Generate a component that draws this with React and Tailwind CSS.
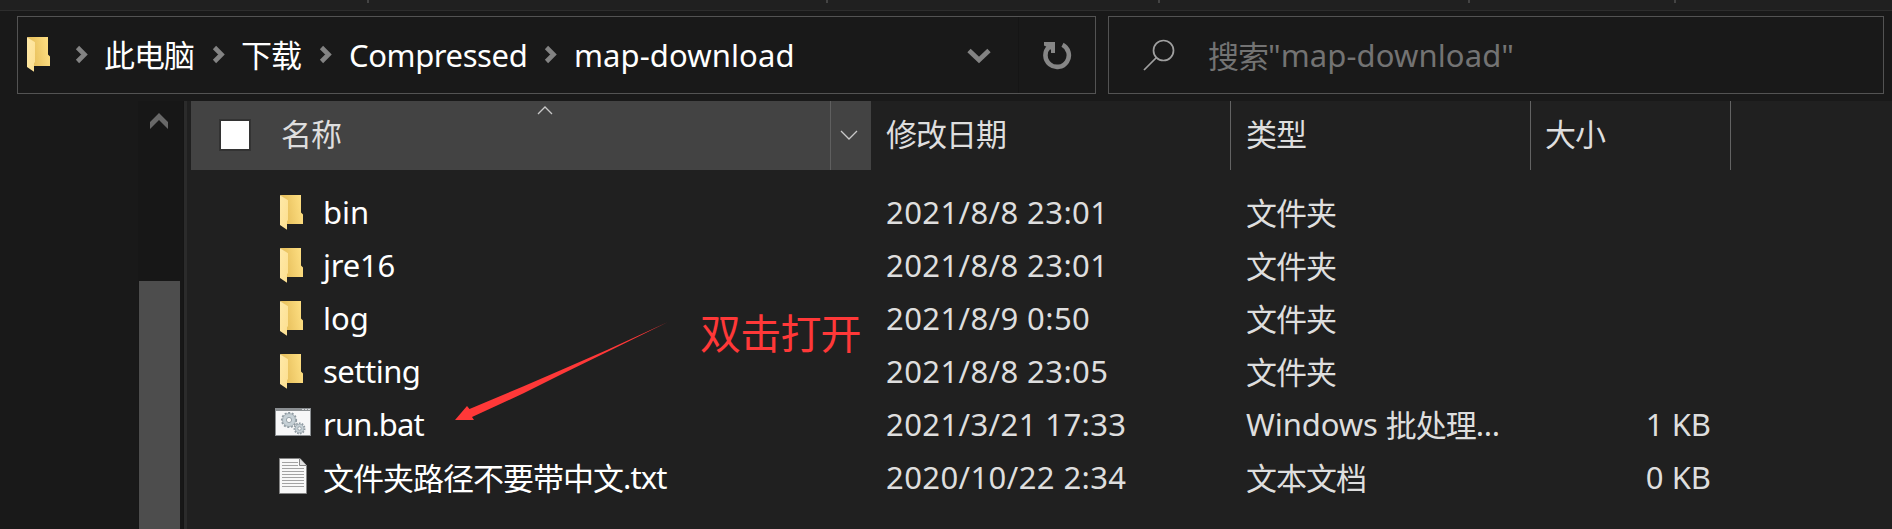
const entries = [
  { icon: "folder", name: [["l", "bin", "tracking-[0px]"]], date: "2021/8/8 23:01", type: [["c", "文件夹"]], size: "" },
  { icon: "folder", name: [["l", "jre16", "tracking-[-0.2px]"]], date: "2021/8/8 23:01", type: [["c", "文件夹"]], size: "" },
  { icon: "folder", name: [["l", "log", "tracking-[0px]"]], date: "2021/8/9 0:50", type: [["c", "文件夹"]], size: "" },
  { icon: "folder", name: [["l", "setting", "tracking-[-0.5px]"]], date: "2021/8/8 23:05", type: [["c", "文件夹"]], size: "" },
  { icon: "bat", name: [["l", "run.bat", "tracking-[-0.9px]"]], date: "2021/3/21 17:33", type: [["l", "Windows ", "tracking-[-0.1px]"], ["c", "批处理"], ["l", "...", "tracking-[-0.3px]"]], size: "1 KB" },
  { icon: "txt", name: [["c", "文件夹路径不要带中文"], ["l", ".txt", "tracking-[-0.9px]"]], date: "2020/10/22 2:34", type: [["c", "文本文档"]], size: "0 KB" },
];

function Cjk({ children }) {
  return <span className="align-[-1px] text-[31px] leading-none tracking-[-1px]">{children}</span>;
}

function Mixed({ parts }) {
  return parts.map(([kind, text, tracking], i) =>
    kind === "c" ? <Cjk key={i}>{text}</Cjk> : <span key={i} className={tracking}>{text}</span>
  );
}

function FolderIcon() {
  return (
    <svg width="24" height="36" viewBox="0 0 24 36" className="block shrink-0">
      <defs>
        <linearGradient id="back" x1="0" y1="0.6" x2="1" y2="0.4">
          <stop offset="0.25" stopColor="#e9c25f" />
          <stop offset="1" stopColor="#fedf83" />
        </linearGradient>
        <linearGradient id="flap" x1="0" y1="0" x2="1" y2="1">
          <stop offset="0" stopColor="#ffe9a8" />
          <stop offset="1" stopColor="#fcdf90" />
        </linearGradient>
      </defs>
      <path d="M0 0H21V17.5L23 19.500V29H6V5Z" fill="url(#back)" />
      <path d="M0 0L8 5.200V25L7 26.200V34.700L0 30Z" fill="url(#flap)" />
    </svg>
  );
}

function Gear({ cx, cy, r, w }) {
  return (
    <g>
      <circle cx={cx} cy={cy} r={r + 0.6} fill="none" stroke="#8f9aa2" strokeWidth="2" strokeDasharray={w} />
      <circle cx={cx} cy={cy} r={r} fill="#c6d0d6" stroke="#98a3aa" strokeWidth="0.8" />
      <circle cx={cx} cy={cy} r={r * 0.4} fill="#fafafa" stroke="#98a3aa" strokeWidth="1" />
    </g>
  );
}

function BatIcon() {
  return (
    <svg width="36" height="28" viewBox="0 0 36 28" className="mb-[5px] block shrink-0">
      <rect width="36" height="28" fill="#8b8f92" />
      <rect x="1" y="3" width="34" height="24" fill="#f7f7f8" />
      <path d="M27 1.500H29M30 1.500H32M33 1.500H35" stroke="#d5d8da" strokeWidth="1" />
      <Gear cx={14} cy={12} r={6.5} w="2 1.6" />
      <Gear cx={24.500} cy={20.500} r={4.4} w="1.6 1.2" />
    </svg>
  );
}

function TxtIcon() {
  return (
    <svg width="28" height="36" viewBox="0 0 28 36" className="mb-[3px] block shrink-0">
      <path d="M0.500 0.500H21L27.500 7.500V35.500H0.500Z" fill="#f8f8f8" stroke="#858585" />
      <path d="M20.500 0.500V7.500H27.500" fill="#e2e2e2" stroke="#858585" />
      <path d="M3 4.500H19M3 7.500H19M3 10.500H25M3 13.500H25M3 16.500H25M3 19.500H25M3 22.500H25M3 25.500H25M3 28.500H25" stroke="#a3a3a3" />
    </svg>
  );
}

const icons = { folder: FolderIcon, bat: BatIcon, txt: TxtIcon };

function Crumb() {
  return (
    <svg width="14" height="20" viewBox="0 0 14 20" className="block shrink-0">
      <path d="M2.500 2.500L9.500 9.500L2.500 16.500" fill="none" stroke="#838383" strokeWidth="4.600" />
    </svg>
  );
}

function TopStrip() {
  return (
    <div className="flex h-[11px] shrink-0 items-start border-b border-[#2d2d2d] bg-[#202020]">
      <div className="ml-[367px] h-[3px] w-[2px] bg-[#444]" />
      <div className="ml-[457px] h-[3px] w-[2px] bg-[#444]" />
      <div className="ml-[330px] h-[3px] w-[2px] bg-[#444]" />
      <div className="ml-[308px] h-[3px] w-[2px] bg-[#444]" />
      <div className="ml-[204px] h-[3px] w-[2px] bg-[#444]" />
    </div>
  );
}

function AddressBar() {
  return (
    <div className="flex h-[78px] w-[1079px] items-center border border-[#535353] text-white">
      <div className="ml-[9px] w-[48px]"><FolderIcon /></div>
      <div className="-mt-px w-[29px]"><Crumb /></div>
      <div className="-mt-[2px] w-[108px] leading-[74px]"><Cjk>此电脑</Cjk></div>
      <div className="-mt-px w-[29px]"><Crumb /></div>
      <div className="-mt-[2px] w-[78px] leading-[74px]"><Cjk>下载</Cjk></div>
      <div className="-mt-px w-[30px]"><Crumb /></div>
      <div className="-mt-px w-[195px] leading-[74px] tracking-[-0.4px]">Compressed</div>
      <div className="-mt-px w-[30px]"><Crumb /></div>
      <div className="-mt-px leading-[74px] tracking-[0.1px]">map-download</div>
      <svg width="24" height="16" viewBox="0 0 24 16" className="ml-auto mr-[27px] mt-[2px] block">
        <path d="M2 2.500L12 12L22 2.500" fill="none" stroke="#838383" strokeWidth="4.800" />
      </svg>
      <div className="flex h-full w-[77px] items-center border-l border-[#151515] pl-[23px] pt-[2px]">
        <svg width="30" height="30" viewBox="0 0 30 30" className="block">
          <path d="M20.500 3.800A11.700 11.700 0 1 1 7 5.800" fill="none" stroke="#868686" strokeWidth="4.600" />
          <path d="M2 1H13V12H9V9L7 7L2 4.500Z" fill="#868686" />
        </svg>
      </div>
    </div>
  );
}

function SearchBox() {
  return (
    <div className="flex h-[78px] w-[776px] items-center border border-[#535353] text-[#737373]">
      <svg width="32" height="32" viewBox="0 0 32 32" className="ml-[34px] block">
        <circle cx="20.500" cy="11.500" r="10" fill="none" stroke="#a0a0a0" strokeWidth="1.700" />
        <path d="M13.500 18.500L1 31" stroke="#a0a0a0" strokeWidth="1.700" />
      </svg>
      <div className="-mt-px ml-[33px] whitespace-nowrap leading-[74px]"><Cjk>搜索</Cjk><span className="tracking-[0.1px]">"map-download"</span></div>
    </div>
  );
}

function NavPane() {
  return (
    <div className="flex w-[187px] shrink-0">
      <div className="w-[138px]" />
      <div className="flex w-[45px] flex-col bg-[#171717] pl-px">
        <svg width="20" height="18" viewBox="0 0 20 18" className="ml-[11px] mt-[11px] block">
          <path d="M0 10L9 1L18 10V17L9 8L0 17Z" fill="#686868" />
        </svg>
        <div className="mt-[151px] w-[41px] flex-1 bg-[#4d4d4d]" />
      </div>
      <div className="w-px bg-[#151515]" />
      <div className="w-[3px] bg-[#2b2b2b]" />
    </div>
  );
}

function HeaderRow() {
  return (
    <div className="ml-[4px] flex h-[69px] leading-[65px] text-[#dedede]">
      <div className="flex w-[639px] bg-[#434343]">
        <div className="ml-[28px] mt-[18px] size-[32px] border-2 border-[#333] bg-white" />
        <div className="ml-[30px] w-[252px]"><Cjk>名称</Cjk></div>
        <svg width="16" height="10" viewBox="0 0 16 10" className="ml-[4px] mt-[4px] block">
          <path d="M1 9L8 2L15 9" fill="none" stroke="#c8c8c8" strokeWidth="1.300" />
        </svg>
      </div>
      <div className="w-[41px] border-l border-[#5f5f5f] bg-[#434343] pl-[9px] pt-[29px]">
        <svg width="18" height="11" viewBox="0 0 18 11" className="block">
          <path d="M1 1L9 9L17 1" fill="none" stroke="#c8c8c8" strokeWidth="1.300" />
        </svg>
      </div>
      <div className="w-[360px] border-r border-[#636363] pl-[15px]"><Cjk>修改日期</Cjk></div>
      <div className="w-[300px] border-r border-[#636363] pl-[15px]"><Cjk>类型</Cjk></div>
      <div className="w-[200px] border-r border-[#636363] pl-[14px]"><Cjk>大小</Cjk></div>
    </div>
  );
}

function EntryRow({ entry }) {
  const Icon = icons[entry.icon];
  return (
    <div className="flex h-[53px] whitespace-nowrap leading-[53px] text-[#dedede]">
      <div className={entry.icon === "folder" ? "ml-[86px] flex w-[43px] items-center justify-center pr-[5px]" : "ml-[86px] flex w-[43px] items-center justify-center pr-[3px]"}>
        <Icon />
      </div>
      <div className="ml-[7px] w-[563px] text-white"><Mixed parts={entry.name} /></div>
      <div className="w-[360px] tracking-[0.4px]">{entry.date}</div>
      <div className="w-[300px]"><Mixed parts={entry.type} /></div>
      <div className="w-[165px] text-right">{entry.size}</div>
    </div>
  );
}

function Annotation() {
  return (
    <div className="pointer-events-none absolute left-[455px] top-[305px] flex">
      <svg width="214" height="116" viewBox="455 305 214 116" className="block">
        <path d="M455 420L467 406L469.500 409L523 386.500L560 370.500L607 350L668 322L607 352L560 375L523 393.500L472 417L474 420Z" fill="#ff3838" />
      </svg>
      <div className="ml-[31px] text-[41px] leading-[56px] tracking-[-0.8px] text-[#ff3838]">双击打开</div>
    </div>
  );
}

export default function App() {
  return (
    <div className="relative flex h-[529px] w-[1892px] flex-col overflow-hidden bg-[#191919] font-['Noto_Sans','Noto_Sans_CJK_SC',sans-serif] text-[31px]">
      <TopStrip />
      <div className="flex h-[90px] shrink-0 gap-[12px] pl-[17px] pt-[5px]">
        <AddressBar />
        <SearchBox />
      </div>
      <div className="flex min-h-0 flex-1">
        <NavPane />
        <div className="flex-1 bg-[#202020]">
          <HeaderRow />
          <div className="pt-[16px]">
            {entries.map((entry, i) => <EntryRow key={i} entry={entry} />)}
          </div>
        </div>
      </div>
      <Annotation />
    </div>
  );
}
